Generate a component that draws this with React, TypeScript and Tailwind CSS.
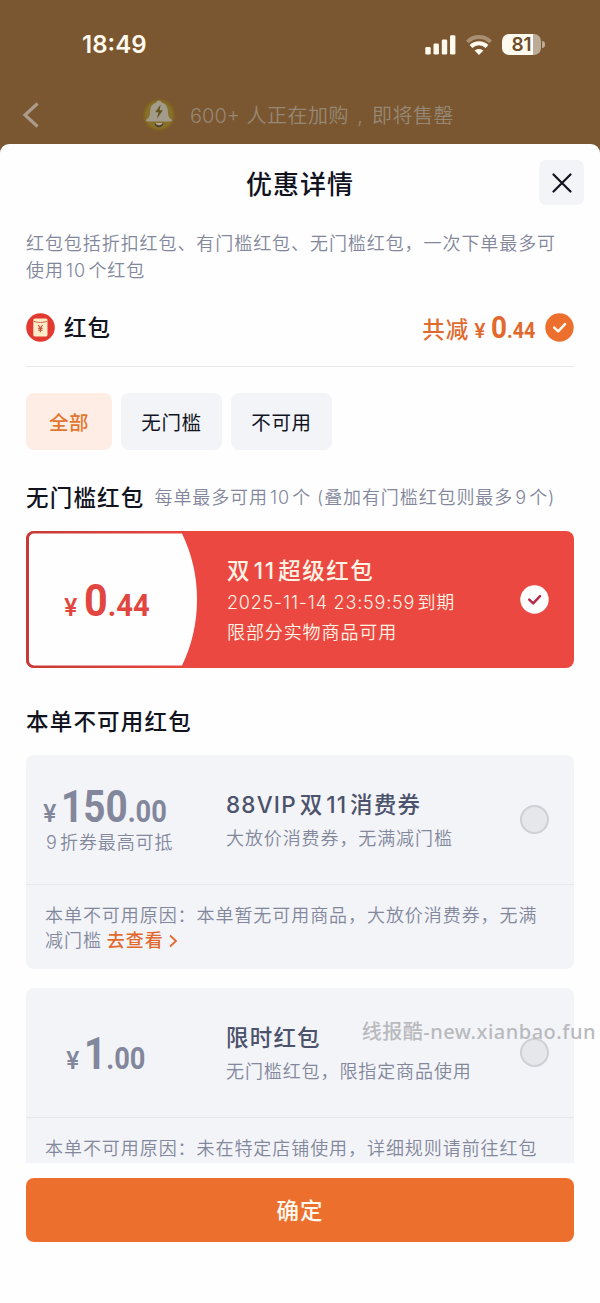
import type { ReactNode } from "react";

type Coupon = {
  yuan: string;
  cents: string;
  note?: string;
  title: string;
  description: string;
  reason: string;
  link?: string;
};

const TABS = [
  { label: "全部", active: true, width: "w-[86px]" },
  { label: "无门槛", active: false, width: "w-[101px]" },
  { label: "不可用", active: false, width: "w-[101px]" },
];

const UNAVAILABLE: Coupon[] = [
  {
    yuan: "150",
    cents: ".00",
    note: "9折券最高可抵",
    title: "88VIP双11消费券",
    description: "大放价消费券，无满减门槛",
    reason: "本单不可用原因：本单暂无可用商品，大放价消费券，无满减门槛",
    link: "去查看",
  },
  {
    yuan: "1",
    cents: ".00",
    title: "限时红包",
    description: "无门槛红包，限指定商品使用",
    reason: "本单不可用原因：未在特定店铺使用，详细规则请前往红包",
  },
];

function StatusBar() {
  return (
    <div className="flex h-[89px] items-center justify-between pr-[55px] pl-[82px] text-[#fff9ee]">
      <span className="text-[24px] leading-none font-semibold">18:49</span>
      <div className="flex items-center gap-[10px]">
        <svg width="31" height="20" viewBox="0 0 31 20" fill="currentColor">
          <rect x="0.3" y="12" width="5.4" height="7.5" rx="1.3" />
          <rect x="8.5" y="8.5" width="5.4" height="11" rx="1.3" />
          <rect x="16.8" y="4.5" width="5.4" height="15" rx="1.3" />
          <rect x="25" y="0.3" width="5.4" height="19.2" rx="1.3" />
        </svg>
        <svg width="26" height="20" viewBox="0 0 26 20" fill="none" stroke="currentColor">
          <path d="M1.4 6.8C8 .4 18 .4 24.6 6.8" strokeWidth="3.8" opacity="0.35" />
          <path d="M5 11.500c4.500-4.300 11.500-4.300 16 0" strokeWidth="4" />
          <path d="M13 19.900l-4.400-4.300c2.500-2.200 6.300-2.200 8.800 0z" fill="currentColor" stroke="none" />
        </svg>
        <div className="flex items-center gap-[1px]">
          <div className="flex h-[21px] w-[39px] items-center justify-center overflow-hidden rounded-[7px] bg-linear-to-r from-[#fffaf0] from-80% to-[#bcab97] to-80%">
            <span className="text-[19px] leading-none font-semibold text-[#6b4c2a]">81</span>
          </div>
          <div className="h-[7px] w-[3px] rounded-r-full bg-[#bcab97]" />
        </div>
      </div>
    </div>
  );
}

function BellBadge() {
  return (
    <svg width="34" height="34" viewBox="0 0 34 34">
      <circle cx="17" cy="17" r="16" fill="#806224" />
      <circle cx="17" cy="17" r="14" fill="#86702a" />
      <path
        d="M17 2.600c1.400 0 2.300.8 2.500 2 4 1 6.200 4.200 6.400 8.600.2 4.400.6 6.200 3.700 8.300.8.700.4 2-.7 2H5.100c-1.100 0-1.500-1.300-.7-2 3.100-2.100 3.500-3.900 3.700-8.300.2-4.400 2.400-7.600 6.400-8.600.2-1.200 1.100-2 2.500-2z"
        fill="#a39b89"
      />
      <path d="M12.600 25h8.800c-.3 2.700-2 4.300-4.400 4.300s-4.100-1.600-4.400-4.300z" fill="#4e4130" />
      <path d="M13.500 25h7c-.4 1.400-1.700 2.200-3.500 2.200s-3.100-.8-3.500-2.200z" fill="#b5ab98" />
      <path d="M18.700 6.500l-5.600 7.700h3.300l-1.500 6.600 6-8.500h-3.300z" fill="#665322" />
    </svg>
  );
}

function EnvelopeIcon() {
  return (
    <svg width="29" height="29" viewBox="0 0 29 29">
      <circle cx="14.500" cy="14.500" r="14.300" fill="#e23a30" />
      <rect x="7.300" y="5.400" width="14.200" height="18" rx="1.600" fill="#fdecc8" />
      <path d="M7.500 8.200c4.200 1.700 9.600 1.700 13.800 0" fill="none" stroke="#cf6a4c" strokeWidth="1" />
      <path
        d="M12.200 12l2.200 3 2.200-3M14.400 15v4.200M12.300 15.300h4.200M12.300 17.200h4.200"
        fill="none"
        stroke="#c8553f"
        strokeWidth="1.200"
      />
    </svg>
  );
}

function CheckDot({ fill, stroke }: { fill: string; stroke: string }) {
  return (
    <svg width="29" height="29" viewBox="0 0 29 29" className="shrink-0">
      <circle cx="14.500" cy="14.500" r="14.200" fill={fill} />
      <path
        d="M9.200 14.600l4 3.800 6.800-7.200"
        fill="none"
        stroke={stroke}
        strokeWidth="2.500"
        strokeLinecap="round"
        strokeLinejoin="round"
      />
    </svg>
  );
}

// the digits are squeezed a little, like a DIN face
function Price({ yuan, cents, wide = false }: { yuan: string; cents: string; wide?: boolean }) {
  return (
    <span className="flex items-baseline leading-none">
      <span className={`text-[24px] font-semibold ${wide ? "mr-[6px]" : "mr-[4px]"}`}>¥</span>
      <span
        className={`flex origin-left items-baseline font-[Roboto] font-bold ${wide ? "scale-x-[0.94]" : "scale-x-[0.88]"}`}
      >
        <span className="text-[44px]">{yuan}</span>
        <span className="text-[31px]">{cents}</span>
      </span>
    </span>
  );
}

function SectionTitle({ children }: { children: ReactNode }) {
  return <h2 className="shrink-0 text-[22.500px] leading-8 font-medium tracking-[1.200px] text-[#11131f]">{children}</h2>;
}

function SelectedCoupon() {
  return (
    <div className="relative flex h-[137px] shrink-0 items-center overflow-hidden rounded-[8px] bg-[#ec4842]">
      <svg className="absolute inset-0" width="172" height="137" viewBox="0 0 172 137">
        <defs>
          <linearGradient id="rim">
            <stop offset="0" stopColor="#c43a36" />
            <stop offset="1" stopColor="#ec4842" />
          </linearGradient>
        </defs>
        <path d="M0 0h172v137H0z" fill="url(#rim)" />
        <path d="M8 2.500h148q15 31 15 66T156 134.500H8a5 5 0 0 1-5-5V7.500a5 5 0 0 1 5-5z" fill="#fefefe" />
      </svg>
      <div className="relative w-[163px] pt-[2px] pl-[38px] text-[#e24640]">
        <Price yuan="0" cents=".44" wide />
      </div>
      <div className="relative ml-[38px] flex-1 pt-[3px] text-[#fff3e4]">
        <p className="text-[22.500px] leading-[34px] font-medium tracking-[1.500px]">双11超级红包</p>
        <p className="text-[18px] leading-[30px] font-[350] tracking-[0.800px]">2025-11-14 23:59:59到期</p>
        <p className="text-[18px] leading-[30px] font-[350] tracking-[0.900px]">限部分实物商品可用</p>
      </div>
      <div className="mr-[25px]">
        <CheckDot fill="#ffffff" stroke="#b52a4a" />
      </div>
    </div>
  );
}

function DisabledCoupon({ coupon }: { coupon: Coupon }) {
  return (
    <div className="shrink-0 rounded-[8px] bg-[#f3f4f8] text-[#82879b]">
      <div className="flex h-[130px] items-center border-b border-[#e8e9ed]">
        <div className={`flex w-[163px] flex-col ${coupon.note ? "pl-[17px]" : "pt-[3px] pl-[40px]"}`}>
          <Price yuan={coupon.yuan} cents={coupon.cents} />
          {coupon.note && (
            <span className="mt-[2px] ml-[3px] text-[18px] leading-6 font-[350] tracking-[0.900px] whitespace-nowrap">
              {coupon.note}
            </span>
          )}
        </div>
        <div className="ml-[37px] flex-1 pt-[4px]">
          <p className="text-[22.500px] leading-[34px] font-medium tracking-[1.200px] text-[#4b526b]">{coupon.title}</p>
          <p className="text-[18px] leading-[34px] font-[350] tracking-[0.900px]">{coupon.description}</p>
        </div>
        <div className="mr-[25px] h-[29px] w-[29px] rounded-full border-2 border-[#ced0d5] bg-[#e5e7eb]" />
      </div>
      <div className="h-[84px] pt-[18px] pr-[30px] pl-[19px] text-[18px] leading-[25px] font-[350] tracking-[0.940px]">
        {coupon.reason}
        {coupon.link && (
          <span className="ml-[5px] font-medium text-[#e2692d]">
            {coupon.link}
            <svg className="ml-1 inline-block align-[-1px]" width="10" height="14" viewBox="0 0 10 14">
              <path d="M2 1.500L8 7l-6 5.500" fill="none" stroke="currentColor" strokeWidth="1.800" />
            </svg>
          </span>
        )}
      </div>
    </div>
  );
}

export default function App() {
  return (
    <div
      lang="zh-CN"
      className="relative flex h-[1303px] w-[600px] flex-col overflow-hidden bg-[#7a5730] font-[Inter,'Noto_Sans_CJK_SC',sans-serif] [text-autospace:normal]"
    >
      <StatusBar />

      {/* dimmed page header */}
      <div className="flex h-[55px] items-center pb-1 pl-[22px] text-[#978875]">
        <svg width="18" height="26" viewBox="0 0 18 26" fill="none" stroke="#aa9b8a" strokeWidth="3.200">
          <path d="M15.500 1.500L3 13l12.500 11.500" />
        </svg>
        <div className="ml-[102px]">
          <BellBadge />
        </div>
        <div className="ml-[14px] flex pt-[3px] text-[20px] font-[350] tracking-[0.500px] whitespace-pre">
          <span className="tracking-normal">600+ </span>
          <span className="ml-px">人正在加购</span>
          <span className="w-[23px] text-center">,</span>
          <span>即将售罄</span>
        </div>
      </div>

      {/* bottom sheet */}
      <div className="flex min-h-0 flex-1 flex-col rounded-t-[9px] bg-[#fefefe]">
        <header className="grid shrink-0 grid-cols-[61px_1fr_61px] items-center pt-4">
          <h1 className="col-start-2 pt-[4px] text-center text-[26px] leading-none font-medium tracking-[1px] text-[#11131f]">优惠详情</h1>
          <button className="flex h-[45px] w-[45px] items-center justify-center rounded-[7px] bg-[#f3f4f8]">
            <svg width="20" height="20" viewBox="0 0 20 20" stroke="#11131f" strokeWidth="2.200" strokeLinecap="round">
              <path d="M1.500 1.500l17 17M18.500 1.500l-17 17" />
            </svg>
          </button>
        </header>

        <main className="flex h-[958px] shrink-0 flex-col overflow-hidden px-[26px]">
          <p className="mt-[25px] -mr-2 shrink-0 text-[18px] leading-[27px] font-[350] tracking-[0.930px] text-[#82879b]">
            红包包括折扣红包、有门槛红包、无门槛红包，一次下单最多可
            <br />
            使用10个红包
          </p>

          <div className="flex h-[83px] shrink-0 items-center border-b border-[#e9e9ec] pt-1">
            <EnvelopeIcon />
            <span className="ml-[9px] pt-[2px] text-[22.500px] font-medium tracking-[1px] text-[#11131f]">红包</span>
            <div className="ml-auto flex items-baseline pt-[4px] font-medium text-[#e2692d]">
              <span className="text-[22.500px] tracking-[1px]">共减</span>
              <span className="ml-[5px] text-[20px] font-semibold">¥</span>
              <span className="-mr-[5px] ml-[5px] flex origin-left scale-x-[0.9] items-baseline font-[Roboto] font-bold">
                <span className="text-[31px] leading-none">0</span>
                <span className="text-[22px] leading-none">.44</span>
              </span>
            </div>
            <div className="ml-[10px]">
              <CheckDot fill="#ed6f2d" stroke="#fffaf0" />
            </div>
          </div>

          <div className="mt-[26px] flex shrink-0 gap-[9px]">
            {TABS.map((tab) => (
              <button
                key={tab.label}
                className={`h-[57px] rounded-[8px] pt-[4px] text-[19.500px] tracking-[0.600px] ${tab.width} ${
                  tab.active ? "bg-[#fdede4] font-medium text-[#e2762f]" : "bg-[#f3f4f8] text-[#11131f]"
                }`}
              >
                {tab.label}
              </button>
            ))}
          </div>

          <div className="mt-[32px] mb-[17px] flex shrink-0 items-center">
            <SectionTitle>无门槛红包</SectionTitle>
            <span className="ml-[10px] text-[18px] leading-8 font-[350] tracking-[0.880px] whitespace-nowrap text-[#82879b]">
              每单最多可用10个 (叠加有门槛红包则最多9个)
            </span>
          </div>
          <SelectedCoupon />

          <div className="mt-[38px] mb-[17px] shrink-0">
            <SectionTitle>本单不可用红包</SectionTitle>
          </div>
          <div className="flex shrink-0 flex-col gap-[19px]">
            {UNAVAILABLE.map((coupon) => (
              <DisabledCoupon key={coupon.title} coupon={coupon} />
            ))}
          </div>
        </main>

        <button className="mx-[26px] mt-[15px] h-[64px] shrink-0 rounded-[8px] bg-[#ed6f2d] pt-[2px] text-[22.500px] font-medium tracking-[1px] text-[#fffaf0]">
          确定
        </button>
      </div>

      <span className="absolute top-[1018px] right-[4px] text-[20px] leading-7 font-medium tracking-[0.500px] whitespace-nowrap text-[#b9babd] [font-family:'Noto_Sans','Noto_Sans_CJK_SC',sans-serif]">
        线报酷-new.xianbao.fun
      </span>
    </div>
  );
}
